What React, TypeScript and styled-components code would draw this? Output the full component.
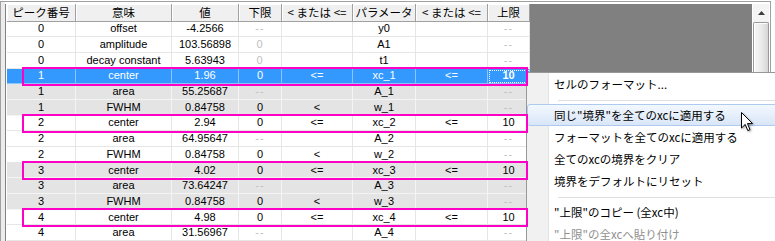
import React from 'react';
import styled, { createGlobalStyle, css } from 'styled-components';

const GlobalStyle = createGlobalStyle`
    html, body {
        margin: 0;
        padding: 0;
        background: #ffffff;
    }
    body {
        overflow: hidden;
    }
`;

const COLUMNS = '69px 96px 67px 43px 71px 63px 72px 42px';
const DIM = '#c0c0c0';

type Band = 'white' | 'gray' | 'selected';

// Layout
const Screen = styled.div`
    position: relative;
    width: 775px;
    height: 241px;
    overflow: hidden;
    background: #ffffff;
    font-family: 'Liberation Sans', 'Noto Sans CJK JP', sans-serif;
`;

const Frame = styled.div`
    box-sizing: border-box;
    margin-top: 1px;
    width: 771px;
    height: 240px;
    border: 1px solid #a0a0a0;
    border-bottom: none;
    padding: 2px 0 0 4px;
    background: linear-gradient(to right, #ececec 0, #ececec 4px, #ffffff 4px);
    display: flex;
`;

const Inner = styled.div`
    flex: 1;
    display: flex;
    border-left: 1px solid #828282;
    padding-left: 1px;
    min-width: 0;
`;

const Grid = styled.div`
    flex: none;
    width: 523px;
    display: flex;
    flex-direction: column;
`;

const Workspace = styled.div`
    flex: 1;
    background: #808080;
`;

const ScrollBar = styled.div`
    flex: none;
    width: 16px;
    margin: 0 1px;
    display: flex;
    flex-direction: column;
    background: #f0f0f0;
`;

const ScrollButton = styled.div`
    height: 18px;
    display: flex;
    align-items: center;
    justify-content: center;
    background: #f4f4f4;
`;

const ScrollThumb = styled.div`
    flex: 1;
    box-sizing: border-box;
    border: 1px solid #9a9a9a;
    border-bottom: none;
    border-radius: 2px 2px 0 0;
    background: linear-gradient(to right, #f6f6f6 0%, #ececec 50%, #d6d6d6 100%);
    box-shadow: inset 1px 1px 0 #ffffff;
`;

// Table
const HeaderRow = styled.div`
    display: grid;
    grid-template-columns: ${COLUMNS};
    height: 18px;
`;

const HeaderCell = styled.div`
    box-sizing: border-box;
    display: flex;
    align-items: center;
    justify-content: center;
    background: #f0f0f0;
    border-right: 1px solid #a0a0a0;
    border-bottom: 1px solid #a0a0a0;
    box-shadow: inset 1px 1px 0 #ffffff;
    font-family: 'Noto Sans CJK JP', sans-serif;
    font-size: 11.5px;
    color: #000000;
    white-space: nowrap;
`;

const bandStyles = {
    white: css`
        background: #ffffff;
        color: #000000;
        --line: #e6e6e6;
    `,
    gray: css`
        background: #e4e4e4;
        color: #000000;
        --line: #f4f4f4;
    `,
    selected: css`
        background: #3399ff;
        color: #ffffff;
        --line: #8cc4ff;
    `,
};

const Row = styled.div<{ $band: Band }>`
    position: relative;
    display: grid;
    grid-template-columns: ${COLUMNS};
    height: 16px;
    ${(p) => bandStyles[p.$band]}
`;

const Cell = styled.div<{ $dim?: boolean; $focus?: boolean }>`
    box-sizing: border-box;
    display: flex;
    align-items: center;
    justify-content: center;
    border-right: 1px solid var(--line);
    border-bottom: 1px solid var(--line);
    font-size: 11px;
    line-height: 1;
    white-space: nowrap;
    overflow: hidden;
    ${(p) => p.$dim && css`
        color: ${DIM};
        letter-spacing: 1px;
    `}
    ${(p) => p.$focus && css`
        outline: 1px dotted #ffffff;
        outline-offset: -2px;
        font-weight: 700;
    `}
`;

const Mark = styled.div`
    position: absolute;
    left: 15px;
    top: -2px;
    width: 506px;
    height: 19px;
    box-sizing: border-box;
    border: 2px solid #ff00c6;
    z-index: 20;
    pointer-events: none;
`;

// Context menu
const Menu = styled.div`
    position: absolute;
    left: 526px;
    top: 72px;
    width: 260px;
    height: 180px;
    box-sizing: border-box;
    border: 1px solid #979797;
    background: linear-gradient(
        to right,
        #f1f1f1 0,
        #f1f1f1 21px,
        #e2e3e3 21px,
        #e2e3e3 22px,
        #ffffff 22px
    );
    z-index: 10;
    font-family: 'Noto Sans CJK JP', sans-serif;
    font-size: 11.5px;
`;

const MenuItem = styled.div<{ $active?: boolean; $disabled?: boolean }>`
    box-sizing: border-box;
    height: 22px;
    display: flex;
    align-items: center;
    padding-left: 26px;
    border: 1px solid transparent;
    border-radius: 3px;
    color: ${(p) => (p.$disabled ? '#8f8f8f' : '#000000')};
    white-space: nowrap;
    ${(p) => p.$active && css`
        border-color: #aecbef;
        background: linear-gradient(to bottom, #f3f8fe 0%, #e6effb 50%, #d9e6f8 100%);
    `}
`;

const MenuSeparator = styled.div`
    height: 1px;
    margin: 5px 0 2px 31px;
    background: #e0e0e0;
    border-bottom: 1px solid #ffffff;
`;

const Cursor = styled.svg`
    position: absolute;
    left: 741px;
    top: 112px;
    z-index: 30;
    filter: drop-shadow(1px 1px 1px rgba(0, 0, 0, 0.35));
`;

interface PeakRow {
    peak: string;
    meaning: string;
    value: string;
    lower: string;
    lowerDim?: boolean;
    lowerOp: string;
    param: string;
    upperOp: string;
    upper: string;
    band: Band;
    marked?: boolean;
}

const rows: PeakRow[] = [
    { peak: '0', meaning: 'offset', value: '-4.2566', lower: '--', lowerOp: '', param: 'y0', upperOp: '', upper: '--', band: 'white' },
    { peak: '0', meaning: 'amplitude', value: '103.56898', lower: '0', lowerDim: true, lowerOp: '', param: 'A1', upperOp: '', upper: '--', band: 'white' },
    { peak: '0', meaning: 'decay constant', value: '5.63943', lower: '0', lowerDim: true, lowerOp: '', param: 't1', upperOp: '', upper: '--', band: 'white' },
    { peak: '1', meaning: 'center', value: '1.96', lower: '0', lowerOp: '<=', param: 'xc_1', upperOp: '<=', upper: '10', band: 'selected', marked: true },
    { peak: '1', meaning: 'area', value: '55.25687', lower: '--', lowerOp: '', param: 'A_1', upperOp: '', upper: '--', band: 'gray' },
    { peak: '1', meaning: 'FWHM', value: '0.84758', lower: '0', lowerOp: '<', param: 'w_1', upperOp: '', upper: '--', band: 'gray' },
    { peak: '2', meaning: 'center', value: '2.94', lower: '0', lowerOp: '<=', param: 'xc_2', upperOp: '<=', upper: '10', band: 'white', marked: true },
    { peak: '2', meaning: 'area', value: '64.95647', lower: '--', lowerOp: '', param: 'A_2', upperOp: '', upper: '--', band: 'white' },
    { peak: '2', meaning: 'FWHM', value: '0.84758', lower: '0', lowerOp: '<', param: 'w_2', upperOp: '', upper: '--', band: 'white' },
    { peak: '3', meaning: 'center', value: '4.02', lower: '0', lowerOp: '<=', param: 'xc_3', upperOp: '<=', upper: '10', band: 'gray', marked: true },
    { peak: '3', meaning: 'area', value: '73.64247', lower: '--', lowerOp: '', param: 'A_3', upperOp: '', upper: '--', band: 'gray' },
    { peak: '3', meaning: 'FWHM', value: '0.84758', lower: '0', lowerOp: '<', param: 'w_3', upperOp: '', upper: '--', band: 'gray' },
    { peak: '4', meaning: 'center', value: '4.98', lower: '0', lowerOp: '<=', param: 'xc_4', upperOp: '<=', upper: '10', band: 'white', marked: true },
    { peak: '4', meaning: 'area', value: '31.56967', lower: '--', lowerOp: '', param: 'A_4', upperOp: '', upper: '--', band: 'white' },
];

const headers = ['ピーク番号', '意味', '値', '下限', '< または <=', 'パラメータ', '< または <=', '上限'];

const App: React.FC = () => {
    const selected = (row: PeakRow) => row.band === 'selected';

    return (
        <Screen>
            <GlobalStyle />
            <Frame>
                <Inner>
                    <Grid>
                        <HeaderRow>
                            {headers.map((h, i) => (
                                <HeaderCell key={i}>{h}</HeaderCell>
                            ))}
                        </HeaderRow>
                        {rows.map((row, i) => (
                            <Row key={i} $band={row.band}>
                                <Cell>{row.peak}</Cell>
                                <Cell>{row.meaning}</Cell>
                                <Cell>{row.value}</Cell>
                                <Cell $dim={!selected(row) && (row.lower === '--' || row.lowerDim)}>
                                    {row.lower}
                                </Cell>
                                <Cell>{row.lowerOp}</Cell>
                                <Cell>{row.param}</Cell>
                                <Cell>{row.upperOp}</Cell>
                                <Cell $dim={row.upper === '--'} $focus={selected(row)}>
                                    {row.upper}
                                </Cell>
                                {row.marked && <Mark />}
                            </Row>
                        ))}
                    </Grid>
                    <Workspace />
                    <ScrollBar>
                        <ScrollButton>
                            <svg width="7" height="4" viewBox="0 0 7 4">
                                <path d="M3.5 0 L7 4 L0 4 Z" fill="#3c3c3c" />
                            </svg>
                        </ScrollButton>
                        <ScrollThumb />
                    </ScrollBar>
                </Inner>
            </Frame>

            <Menu>
                <MenuItem>セルのフォーマット...</MenuItem>
                <MenuSeparator />
                <MenuItem $active>同じ"境界"を全てのxcに適用する</MenuItem>
                <MenuItem>フォーマットを全てのxcに適用する</MenuItem>
                <MenuItem>全てのxcの境界をクリア</MenuItem>
                <MenuItem>境界をデフォルトにリセット</MenuItem>
                <MenuSeparator />
                <MenuItem>"上限"のコピー (全xc中)</MenuItem>
                <MenuItem $disabled>"上限"の全xcへ貼り付け</MenuItem>
            </Menu>

            <Cursor width="13" height="20" viewBox="0 0 13 20">
                <path
                    d="M0.5 0.5 L0.5 16 L4.2 12.4 L6.8 18.6 L9 17.7 L6.5 11.6 L11.6 11.6 Z"
                    fill="#ffffff"
                    stroke="#000000"
                    strokeWidth="1"
                    strokeLinejoin="round"
                />
            </Cursor>
        </Screen>
    );
};

export default App;
